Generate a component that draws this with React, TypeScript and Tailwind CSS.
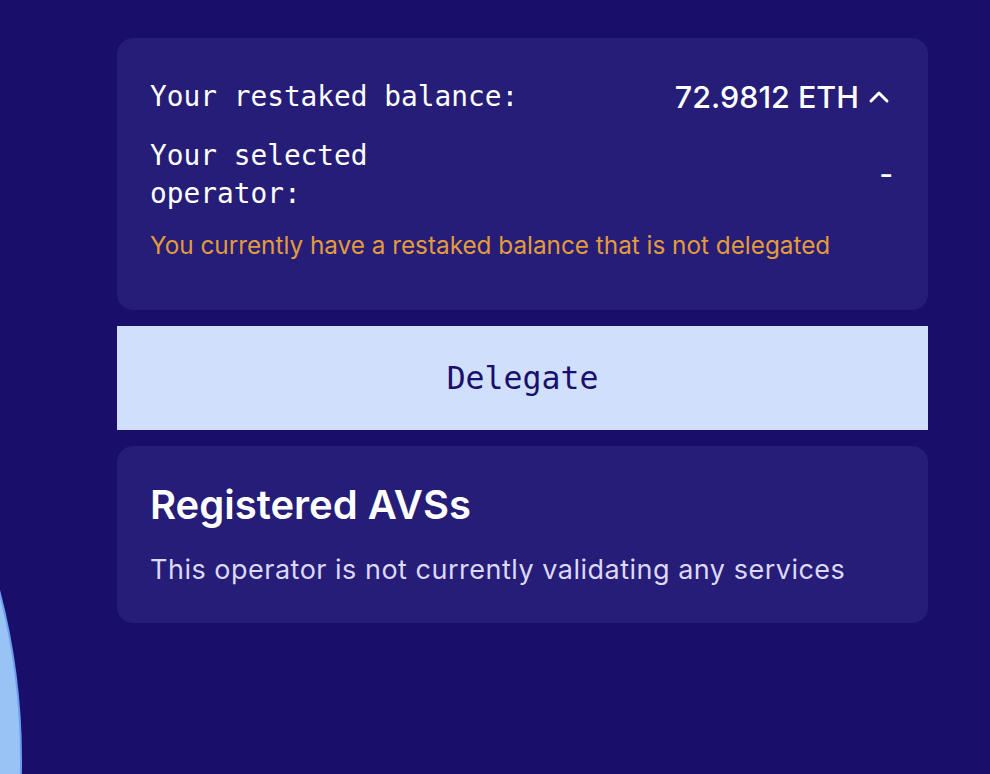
import { ChevronUp } from 'lucide-react';

const MONO = { fontFamily: '"DejaVu Sans Mono", "Liberation Mono", monospace' };
const SANS = { fontFamily: 'Inter, "Noto Sans", sans-serif' };

function BalanceCard() {
  return (
    <div className="rounded-2xl bg-[#261d78] px-[33px] pt-[36px] pb-[47px]">
      <div className="flex items-center justify-between">
        <span className="text-[27.8px] leading-[40px] text-white" style={MONO}>Your restaked balance:</span>
        <span className="flex items-center gap-[4px] text-[30.5px] font-medium text-white" style={SANS}>
          72.9812 ETH
          <ChevronUp className="h-[32px] w-[32px]" strokeWidth={2.2} />
        </span>
      </div>
      <div className="mt-[17px] flex items-center justify-between">
        <span className="w-[260px] text-[27.8px] leading-[38px] text-white" style={MONO}>Your selected operator:</span>
        <span className="pr-[2px] text-[30px] font-medium text-white" style={SANS}>-</span>
      </div>
      <p className="mt-[14px] text-[24.3px] text-[#e39b3b]" style={SANS}>
        You currently have a restaked balance that is not delegated
      </p>
    </div>
  );
}

function AvsCard() {
  return (
    <div className="rounded-2xl bg-[#261d78] px-[33px] pt-[36px] pb-[32px]">
      <h2 className="text-[40px] font-semibold leading-[46px] text-white" style={SANS}>Registered AVSs</h2>
      <p className="mt-[22px] text-[27px] tracking-[0.5px] text-[#dcd8f6]" style={SANS}>
        This operator is not currently validating any services
      </p>
    </div>
  );
}

export default function App() {
  return (
    <div className="relative h-[774px] w-[990px] overflow-hidden bg-[#190e69]">
      <div className="absolute left-[-1314px] top-[92px] h-[1336px] w-[1336px] rounded-full border-[2px] border-[#6d9ff0] bg-[#99c2f5]" />
      <div className="relative flex w-[928px] flex-col gap-4 pl-[117px] pt-[38px]">
        <BalanceCard />
        <button className="h-[104px] w-full bg-[#cfdffc] text-[31.5px] text-[#1a0f6b]" style={MONO}>
          Delegate
        </button>
        <AvsCard />
      </div>
    </div>
  );
}
